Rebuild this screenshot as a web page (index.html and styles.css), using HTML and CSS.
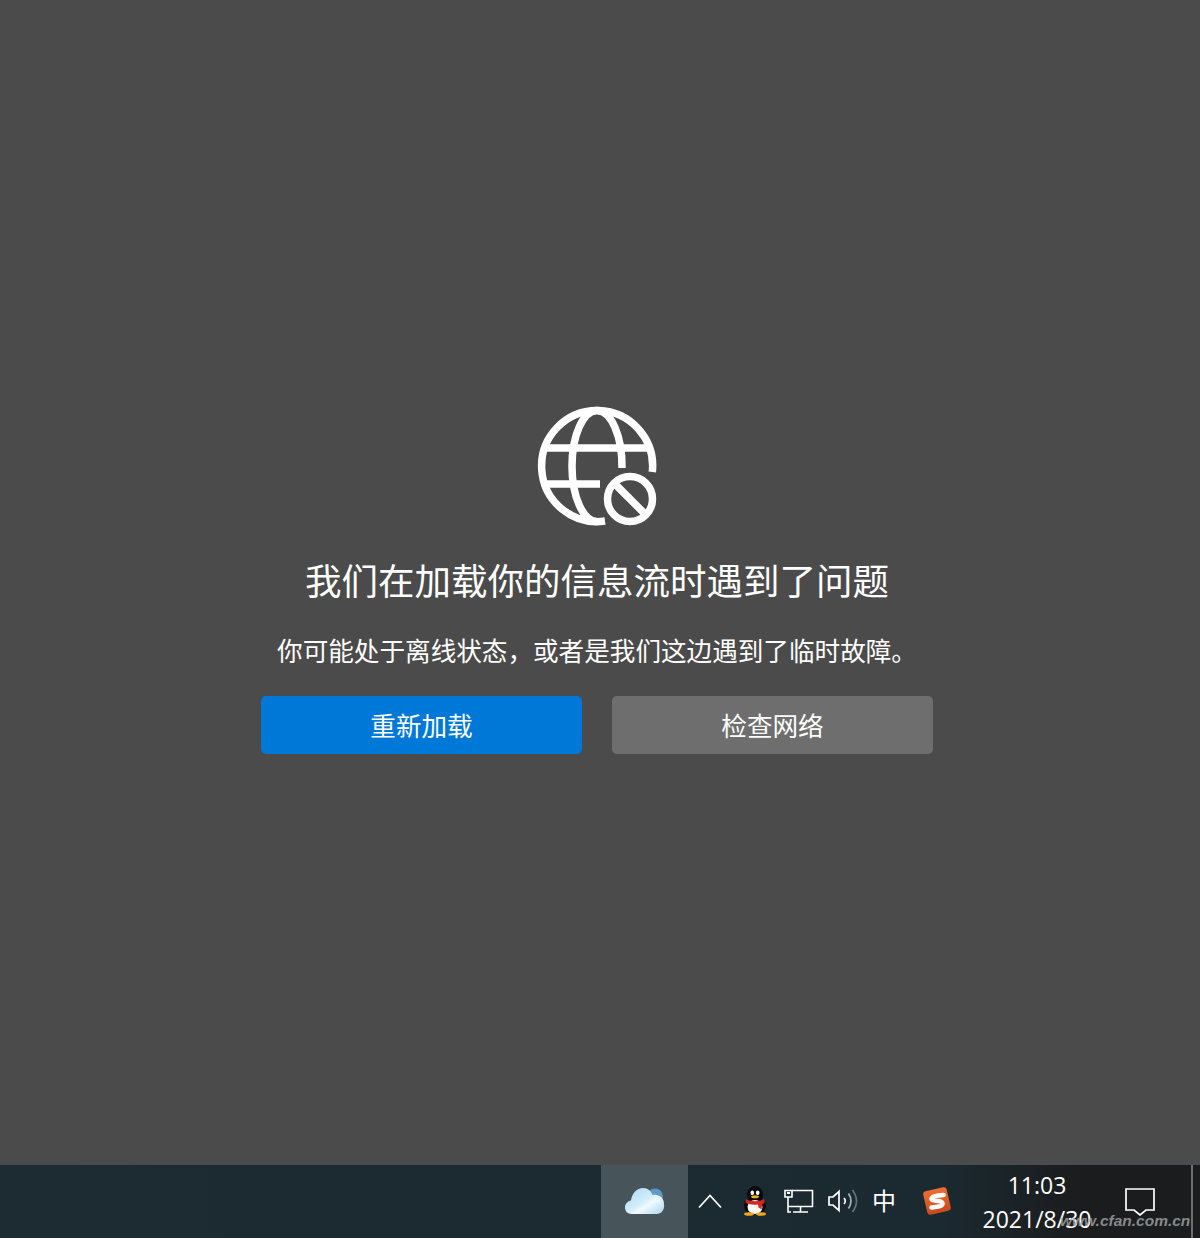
FILE: index.html
```html
<!DOCTYPE html>
<html lang="zh-CN">
<head>
<meta charset="utf-8">
<title>资讯</title>
<link rel="stylesheet" href="styles.css">
</head>
<body>
<main class="feed-error">
  <svg class="globe" viewBox="0 0 120 120" fill="none" stroke="#fff" stroke-width="7.5">
    <path d="M115.3 66A55.5 55.5 0 1 0 68 115"/>
    <path d="M60 4.5A25 55.5 0 0 0 60 115.5"/>
    <path d="M60 4.5A25 55.5 0 0 1 85 62"/>
    <path d="M10 42H110M10 78H63"/>
    <circle cx="93" cy="93" r="22.5"/>
    <path d="M77 77L109 109"/>
  </svg>
  <h1 class="title">我们在加载你的信息流时遇到了问题</h1>
  <p class="subtitle">你可能处于离线状态，或者是我们这边遇到了临时故障。</p>
  <div class="actions">
    <button class="btn btn-primary">重新加载</button>
    <button class="btn btn-secondary">检查网络</button>
  </div>
</main>
<footer class="taskbar">
  <div class="weather">
    <svg class="cloud" viewBox="0 0 40 28">
      <defs>
        <linearGradient id="cloudFill" x1="0" y1="0" x2="1" y2="1">
          <stop offset="0" stop-color="#a9d9f5"/>
          <stop offset="0.5" stop-color="#d3eefb"/>
          <stop offset="0.62" stop-color="#f1fafe"/>
          <stop offset="1" stop-color="#a5d5f0"/>
        </linearGradient>
      </defs>
      <circle cx="30" cy="9.500" r="8" fill="#5d9ac6"/>
      <path fill="url(#cloudFill)" d="M7 27C2 27 0 23.500 0 20.500 0 16.500 3 14 6 13.500 7 6 12 1 18 1 23 1 26 4 27.500 8 33 6.500 39 10 39 17 40 23 36 27 32 27Z"/>
    </svg>
  </div>
  <div class="tray">
    <svg class="tray-chevron" viewBox="0 0 24 16" fill="none" stroke="#fff" stroke-width="1.700"><path d="M1 14.500L12 2.500 23 14.500"/></svg>
    <svg class="tray-qq" viewBox="0 0 24 30">
      <ellipse cx="12" cy="9" rx="8" ry="9" fill="#08080c"/>
      <ellipse cx="12" cy="20" rx="11" ry="8.500" fill="#08080c"/>
      <ellipse cx="12" cy="21" rx="7.500" ry="7" fill="#fbfbfb"/>
      <ellipse cx="9.300" cy="6.800" rx="1.800" ry="2.400" fill="#fff"/>
      <ellipse cx="14.700" cy="6.800" rx="1.800" ry="2.400" fill="#fff"/>
      <ellipse cx="12" cy="10.800" rx="3.800" ry="1.500" fill="#f2b01e"/>
      <path fill="#d8261f" d="M3 13C8 16 16 16 21 13L21.500 17 19 18.500 18.500 23.500 15.500 21.500 15 18.500C10 19 6 18.500 3 17z"/>
      <ellipse cx="6" cy="28" rx="5" ry="1.800" fill="#f2a51e"/>
      <ellipse cx="18" cy="28" rx="5" ry="1.800" fill="#f2a51e"/>
    </svg>
    <svg class="tray-net" viewBox="0 0 30 24" fill="none" stroke="#fff" stroke-width="1.600">
      <path d="M8 1.500H28.500V17.500H4"/>
      <path d="M1 1.500H8V8H1zM4 8V23H7M16.500 17.500V23M9 23H24"/>
      <path d="M3 4H6" stroke-width="2"/>
    </svg>
    <svg class="tray-vol" viewBox="0 0 30 24" fill="none" stroke="#fff" stroke-width="1.700">
      <path d="M1 8H5L11 2.500V21.500L5 16H1z"/>
      <path d="M16 9Q18.500 12 16 15"/>
      <path d="M20.500 4.500Q25.500 12 20.500 19.500" stroke="#aab3b7"/>
      <path d="M24.500 1Q32.500 12 24.500 23" stroke="#64727a"/>
    </svg>
    <span class="tray-ime">中</span>
    <svg class="tray-sogou" viewBox="0 0 30 30">
      <defs>
        <linearGradient id="sogouFill" x1="0" y1="0" x2="0" y2="1">
          <stop offset="0" stop-color="#ef6d2f"/>
          <stop offset="1" stop-color="#c94a20"/>
        </linearGradient>
      </defs>
      <rect x="3" y="3" width="24" height="24" rx="3" fill="url(#sogouFill)" transform="rotate(-13 15 15)"/>
      <path fill="none" stroke="#fff" stroke-width="4.600" stroke-linecap="round" d="M21.500 9C16 9.500 9.500 10 9.500 13 9.500 16 20.500 13.500 20.500 17.500 20.500 20.500 14.500 21 9.500 21.500"/>
    </svg>
  </div>
  <div class="clock">
    <span class="clock-time">11:03</span>
    <span class="clock-date">2021/8/30</span>
  </div>
  <div class="notify">
    <svg class="notify-icon" viewBox="0 0 30 28" fill="none" stroke="#fff" stroke-width="1.700"><path d="M1 1H29V22H21L15 27 9 22H1z"/></svg>
  </div>
  <div class="show-desktop"></div>
  <span class="watermark">www.cfan.com.cn</span>
</footer>
</body>
</html>
```
FILE: styles.css
```css
* { box-sizing: border-box; }
html, body { margin: 0; height: 100%; }
body {
  display: flex;
  flex-direction: column;
  height: 1238px;
  overflow: hidden;
  background: #4b4b4b;
  color: #fff;
  font-family: "Noto Sans CJK SC", "Noto Sans", sans-serif;
}
.feed-error {
  flex: 1;
  display: flex;
  flex-direction: column;
  align-items: center;
  padding: 406px 6px 0 0;
}
.globe { width: 120px; height: 120px; display: block; }
.title {
  margin: 28px 0 0;
  font-size: 36.500px;
  line-height: 52px;
  font-weight: 400;
  white-space: nowrap;
}
.subtitle {
  margin: 26px 0 0;
  font-size: 25.600px;
  line-height: 36px;
  white-space: nowrap;
}
.actions { display: flex; gap: 30px; margin-top: 28px; }
.btn {
  width: 321px;
  height: 58px;
  border: 0;
  border-radius: 5px;
  color: #fff;
  font-family: inherit;
  font-size: 25.600px;
  padding: 0 0 2px;
}
.btn-primary { background: #0078d7; }
.btn-secondary { background: #6e6e6e; }
.taskbar {
  position: relative;
  height: 73px;
  flex: none;
  display: flex;
  background: linear-gradient(90deg, #1c2c32 0%, #1b2a31 78%, #1b1c1d 90%);
}
.weather {
  margin-left: 601px;
  width: 87px;
  background: #47555b;
  display: flex;
  align-items: center;
  justify-content: center;
}
.cloud { width: 40px; height: 28px; margin-top: -1px; }
.tray { display: flex; align-items: center; margin-left: 10px; margin-top: -1px; }
.tray-chevron { width: 24px; height: 16px; }
.tray-qq { width: 24px; height: 30px; margin-left: 21px; }
.tray-net { width: 30px; height: 24px; margin-left: 17px; }
.tray-vol { width: 30px; height: 24px; margin-left: 14px; }
.tray-ime { width: 24px; margin-left: 14px; font-size: 24px; line-height: 1; margin-top: -3px; }
.tray-sogou { width: 30px; height: 30px; margin-left: 26px; }
.clock {
  width: 120px;
  margin-left: 25px;
  display: flex;
  flex-direction: column;
  align-items: center;
  font-family: "Open Sans", "Noto Sans", sans-serif;
  font-size: 23px;
  line-height: 32px;
  padding-top: 4px;
}
.clock-date { margin-top: 2px; }
.notify {
  margin-left: 25px;
  width: 36px;
  display: flex;
  align-items: center;
  justify-content: center;
}
.notify-icon { width: 30px; height: 28px; }
.show-desktop {
  margin-left: 33px;
  width: 2px;
  background: #6f7072;
}
.watermark {
  position: absolute;
  left: 1060px;
  top: 47px;
  font-family: "Liberation Sans", sans-serif;
  font-size: 15.500px;
  font-style: italic;
  font-weight: 700;
  color: rgba(165, 167, 169, 0.8);
  white-space: nowrap;
}
```
